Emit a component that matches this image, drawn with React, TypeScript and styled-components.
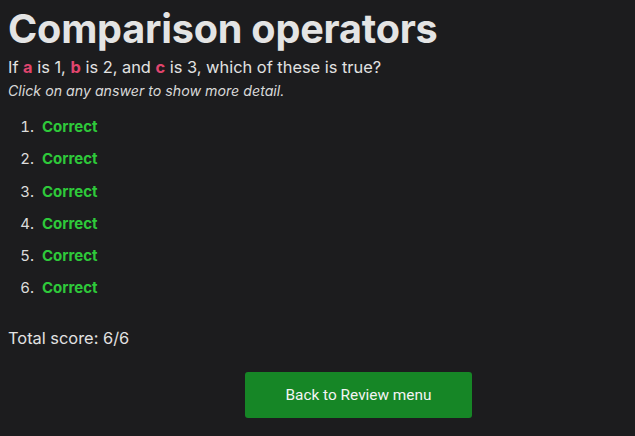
import React from "react";
import styled, { createGlobalStyle } from "styled-components";

const Global = createGlobalStyle`
  html, body { margin: 0; padding: 0; background: #1c1c1e; }
  body { font-family: Inter, "Noto Sans", sans-serif; color: #e2e2e2; }
`;

const Page = styled.div`
  padding: 0 8px;
  display: flex;
  flex-direction: column;
`;

const Title = styled.h1`
  margin: 5px 0 0;
  font-size: 39.6px;
  font-weight: 700;
  line-height: 48px;
  color: #e4e4e4;
  letter-spacing: -0.2px;
`;

const Question = styled.p`
  margin: 2px 0 0;
  font-size: 16.4px;
  line-height: 24px;
  color: #e2e2e2;
`;

const Var = styled.b`
  color: #e0456e;
  font-weight: 700;
`;

const Hint = styled.p`
  margin: 2px 0 0;
  font-size: 14.2px;
  line-height: 20px;
  font-style: italic;
  color: #d8d8d8;
`;

const List = styled.ol`
  margin: 16px 0 0;
  padding-left: 30px;
  font-size: 15px;
`;

const Item = styled.li`
  line-height: 20px;
  margin-bottom: 12.3px;
  padding-left: 4px;
  color: #dcdcdc;
`;

const Correct = styled.span`
  color: #2ec93a;
  font-weight: 700;
`;

const Score = styled.p`
  margin: 16px 0 0;
  font-size: 16.4px;
  line-height: 22px;
  color: #e2e2e2;
`;

const Button = styled.button`
  margin: 23px 0 0 237px;
  width: 227px;
  height: 46px;
  background: #168626;
  color: #f4f4f4;
  border: none;
  border-radius: 3px;
  font-family: Roboto, sans-serif;
  font-size: 15.4px;
  cursor: pointer;
`;

export default function App() {
  return (
    <>
      <Global />
      <Page>
        <Title>Comparison operators</Title>
        <Question>
          If <Var>a</Var> is 1, <Var>b</Var> is 2, and <Var>c</Var> is 3, which of these is true?
        </Question>
        <Hint>Click on any answer to show more detail.</Hint>
        <List>
          {[1, 2, 3, 4, 5, 6].map((n) => (
            <Item key={n}>
              <Correct>Correct</Correct>
            </Item>
          ))}
        </List>
        <Score>Total score: 6/6</Score>
        <div>
          <Button>Back to Review menu</Button>
        </div>
      </Page>
    </>
  );
}
